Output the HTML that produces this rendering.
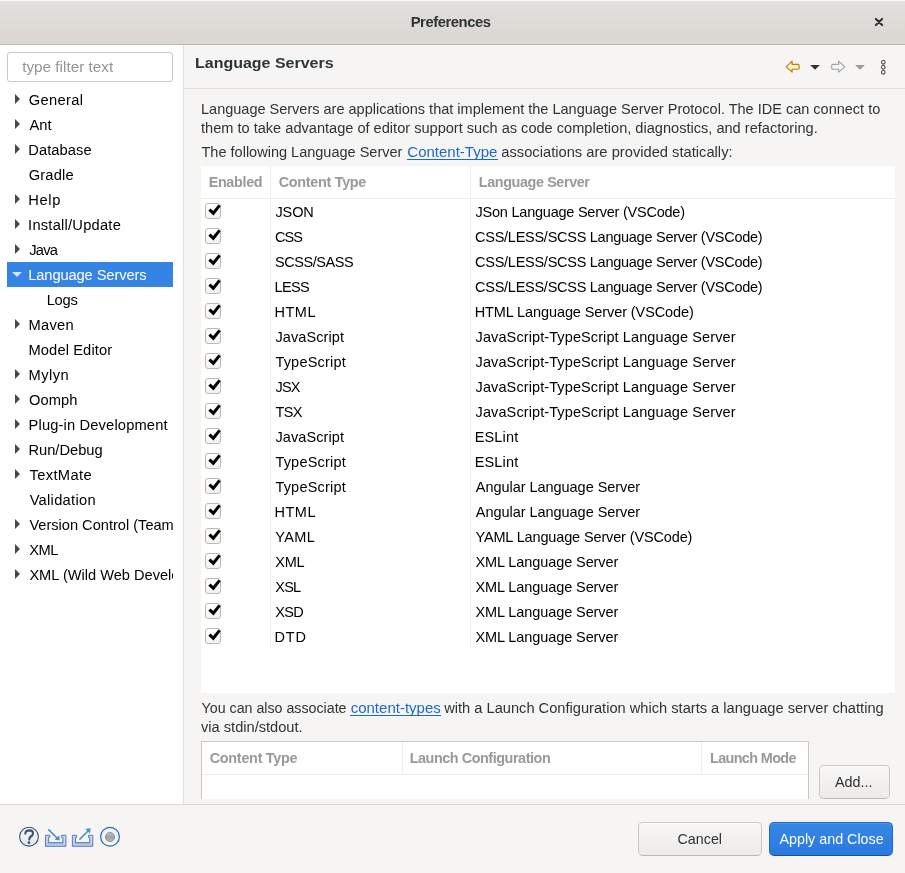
<!DOCTYPE html>
<html><head><meta charset="utf-8"><title>Preferences</title>
<style>
html,body{margin:0;padding:0}
body{width:905px;height:873px;position:relative;overflow:hidden;background:#f6f5f4;font-family:"Liberation Sans", sans-serif}
.t{position:absolute;line-height:20px;white-space:nowrap}
.lk{color:#1b6acb;text-decoration:underline}
.cb{position:absolute;width:14px;height:14px;border:1px solid #bfb8b1;border-radius:3px;background:linear-gradient(#ffffff,#f3f2f1)}
.btn{position:absolute;border:1px solid #cdc7c2;border-bottom-color:#bfb8b1;border-radius:5px;background:linear-gradient(#f8f7f6,#edebe9);box-shadow:inset 0 1px #fff}
</style></head><body><div id="root" style="position:absolute;left:0;top:0;width:905px;height:873px;will-change:transform">
<div style="position:absolute;left:0;top:0;width:905px;height:44px;background:linear-gradient(#e3e0dd,#dad6d2);border-bottom:1px solid #bfb8b1;box-shadow:inset 0 1px #faf9f8"></div>
<div class="t" style="left:410.64px;top:11.87px;font-size:14.8px;color:#2e3436;font-weight:bold;letter-spacing:-0.438px;">Preferences</div>
<svg style="position:absolute;left:872px;top:15px" width="14" height="14"><path d="M3.9 3.9 L10.1 10.1 M10.1 3.9 L3.9 10.1" stroke="#2e3436" stroke-width="2.1" stroke-linecap="round"/></svg>
<div style="position:absolute;left:0;top:45px;width:183px;height:759px;background:#fff;border-right:1px solid #e2e0de"></div>
<div style="position:absolute;left:7px;top:52px;width:164px;height:28px;border:1px solid #cdc7c2;border-radius:3px;background:#fff"></div>
<div class="t" style="left:22.20px;top:56.70px;font-size:15.3px;color:#929595;font-weight:normal;letter-spacing:0px;">type filter text</div>
<div style="position:absolute;left:7px;top:87px;width:166px;height:510px;overflow:hidden">
<svg style="position:absolute;left:8px;top:7px" width="6" height="10"><path d="M0 0 L5 5 L0 10Z" fill="#45494b"/></svg>
<div class="t" style="left:21.66px;top:2.71px;font-size:14.7px;color:#000;font-weight:normal;letter-spacing:0.339px;">General</div>
<svg style="position:absolute;left:8px;top:32px" width="6" height="10"><path d="M0 0 L5 5 L0 10Z" fill="#45494b"/></svg>
<div class="t" style="left:22.40px;top:27.71px;font-size:14.7px;color:#000;font-weight:normal;letter-spacing:0.112px;">Ant</div>
<svg style="position:absolute;left:8px;top:57px" width="6" height="10"><path d="M0 0 L5 5 L0 10Z" fill="#45494b"/></svg>
<div class="t" style="left:21.22px;top:52.71px;font-size:14.7px;color:#000;font-weight:normal;letter-spacing:0.078px;">Database</div>
<div class="t" style="left:21.66px;top:77.71px;font-size:14.7px;color:#000;font-weight:normal;letter-spacing:0.165px;">Gradle</div>
<svg style="position:absolute;left:8px;top:107px" width="6" height="10"><path d="M0 0 L5 5 L0 10Z" fill="#45494b"/></svg>
<div class="t" style="left:21.22px;top:102.71px;font-size:14.7px;color:#000;font-weight:normal;letter-spacing:0.685px;">Help</div>
<svg style="position:absolute;left:8px;top:132px" width="6" height="10"><path d="M0 0 L5 5 L0 10Z" fill="#45494b"/></svg>
<div class="t" style="left:21.08px;top:127.71px;font-size:14.7px;color:#000;font-weight:normal;letter-spacing:0.225px;">Install/Update</div>
<svg style="position:absolute;left:8px;top:157px" width="6" height="10"><path d="M0 0 L5 5 L0 10Z" fill="#45494b"/></svg>
<div class="t" style="left:22.18px;top:152.71px;font-size:14.7px;color:#000;font-weight:normal;letter-spacing:-0.732px;">Java</div>
<div style="position:absolute;left:0;top:175px;width:166px;height:25px;background:#3584e4"></div>
<svg style="position:absolute;left:5px;top:185px" width="10" height="6"><path d="M0 0 L10 0 L5 5Z" fill="#d0e1f8"/></svg>
<div class="t" style="left:21.22px;top:177.71px;font-size:14.7px;color:#fff;font-weight:normal;letter-spacing:-0.112px;">Language Servers</div>
<div class="t" style="left:39.72px;top:202.71px;font-size:14.7px;color:#000;font-weight:normal;letter-spacing:-0.269px;">Logs</div>
<svg style="position:absolute;left:8px;top:232px" width="6" height="10"><path d="M0 0 L5 5 L0 10Z" fill="#45494b"/></svg>
<div class="t" style="left:21.52px;top:227.71px;font-size:14.7px;color:#000;font-weight:normal;letter-spacing:0.258px;">Maven</div>
<div class="t" style="left:21.52px;top:252.71px;font-size:14.7px;color:#000;font-weight:normal;letter-spacing:0.103px;">Model Editor</div>
<svg style="position:absolute;left:8px;top:282px" width="6" height="10"><path d="M0 0 L5 5 L0 10Z" fill="#45494b"/></svg>
<div class="t" style="left:21.52px;top:277.71px;font-size:14.7px;color:#000;font-weight:normal;letter-spacing:0.441px;">Mylyn</div>
<svg style="position:absolute;left:8px;top:307px" width="6" height="10"><path d="M0 0 L5 5 L0 10Z" fill="#45494b"/></svg>
<div class="t" style="left:22.04px;top:302.71px;font-size:14.7px;color:#000;font-weight:normal;letter-spacing:0.075px;">Oomph</div>
<svg style="position:absolute;left:8px;top:332px" width="6" height="10"><path d="M0 0 L5 5 L0 10Z" fill="#45494b"/></svg>
<div class="t" style="left:21.52px;top:327.71px;font-size:14.7px;color:#000;font-weight:normal;letter-spacing:0.152px;">Plug-in Development</div>
<svg style="position:absolute;left:8px;top:357px" width="6" height="10"><path d="M0 0 L5 5 L0 10Z" fill="#45494b"/></svg>
<div class="t" style="left:21.52px;top:352.71px;font-size:14.7px;color:#000;font-weight:normal;letter-spacing:-0.031px;">Run/Debug</div>
<svg style="position:absolute;left:8px;top:382px" width="6" height="10"><path d="M0 0 L5 5 L0 10Z" fill="#45494b"/></svg>
<div class="t" style="left:22.41px;top:377.71px;font-size:14.7px;color:#000;font-weight:normal;letter-spacing:0.382px;">TextMate</div>
<div class="t" style="left:22.63px;top:402.71px;font-size:14.7px;color:#000;font-weight:normal;letter-spacing:0.278px;">Validation</div>
<svg style="position:absolute;left:8px;top:432px" width="6" height="10"><path d="M0 0 L5 5 L0 10Z" fill="#45494b"/></svg>
<div class="t" style="left:22.40px;top:427.74px;font-size:14.6px;color:#000;font-weight:normal;letter-spacing:0px;">Version Control (Team)</div>
<svg style="position:absolute;left:8px;top:457px" width="6" height="10"><path d="M0 0 L5 5 L0 10Z" fill="#45494b"/></svg>
<div class="t" style="left:22.33px;top:452.71px;font-size:14.7px;color:#000;font-weight:normal;letter-spacing:-0.55px;">XML</div>
<svg style="position:absolute;left:8px;top:482px" width="6" height="10"><path d="M0 0 L5 5 L0 10Z" fill="#45494b"/></svg>
<div class="t" style="left:22.40px;top:477.74px;font-size:14.6px;color:#000;font-weight:normal;letter-spacing:0px;">XML (Wild Web Developer)</div>
</div>
<div style="position:absolute;left:184px;top:88px;width:721px;height:1px;background:#dfdcd9"></div>
<div class="t" style="left:195.46px;top:53.18px;font-size:13.9px;color:#2e3436;font-weight:bold;letter-spacing:0px;transform:scaleX(1.1507);transform-origin:0 0">Language Servers</div>
<svg style="position:absolute;left:780px;top:55px" width="110" height="24" viewBox="0 0 110 24">
<defs><linearGradient id="ag" x1="0" y1="0" x2="0" y2="1"><stop offset="0" stop-color="#fffbe6"/><stop offset="1" stop-color="#fbe9a6"/></linearGradient></defs><path d="M6.2 11.8 L12.1 6.2 L12.1 9.3 L18.1 9.3 Q19.1 9.3 19.1 10.3 L19.1 13.2 Q19.1 14.2 18.1 14.2 L12.1 14.2 L12.1 17.2 Z" fill="url(#ag)" stroke="#b77f10" stroke-width="1.15" stroke-linejoin="round"/>
<path d="M30.2 9.9 L39.8 9.9 L35 14.8 Z" fill="#2e3436"/>
<path d="M64.8 11.8 L58.6 6.2 L58.6 9.4 L52.7 9.4 Q51.7 9.4 51.7 10.4 L51.7 13.2 Q51.7 14.2 52.7 14.2 L58.6 14.2 L58.6 17.2 Z" fill="#f7f7f7" stroke="#a3a3a3" stroke-width="1.1" stroke-linejoin="round"/>
<path d="M75.2 9.9 L84.8 9.9 L80 14.8 Z" fill="#9a9a9a"/>
<circle cx="103.3" cy="7.3" r="1.8" fill="#fff" stroke="#444" stroke-width="1.05"/>
<circle cx="103.3" cy="12.3" r="1.8" fill="#fff" stroke="#444" stroke-width="1.05"/>
<circle cx="103.3" cy="17.3" r="1.8" fill="#fff" stroke="#444" stroke-width="1.05"/>
</svg>
<div class="t" style="left:201.00px;top:98.98px;font-size:14.5px;color:#2e3436;font-weight:normal;letter-spacing:0px;white-space:nowrap">Language Servers are applications that implement the Language Server Protocol. The IDE can connect to</div>
<div class="t" style="left:201.00px;top:117.95px;font-size:14.58px;color:#2e3436;font-weight:normal;letter-spacing:0px;white-space:nowrap">them to take advantage of editor support such as code completion, diagnostics, and refactoring.</div>
<div class="t" style="left:201.50px;top:141.97px;font-size:14.52px;color:#2e3436;font-weight:normal;letter-spacing:0px;">The following Language Server</div>
<div class="t" style="left:407.30px;top:141.80px;font-size:15.0px;color:#1b6acb;font-weight:normal;letter-spacing:0px;">Content-Type</div>
<div style="position:absolute;left:407px;top:159px;width:91px;height:1px;background:#1b6acb"></div>
<div class="t" style="left:501.30px;top:141.90px;font-size:14.71px;color:#2e3436;font-weight:normal;letter-spacing:0px;">associations are provided statically:</div>
<div style="position:absolute;left:201px;top:166px;width:694px;height:527px;background:#fff"></div>
<div style="position:absolute;left:201px;top:198px;width:694px;height:1px;background:#efedeb"></div>
<div style="position:absolute;left:270px;top:166px;width:1px;height:483px;background:#efedeb"></div>
<div style="position:absolute;left:470px;top:166px;width:1px;height:483px;background:#efedeb"></div>
<div class="t" style="left:208.66px;top:172.01px;font-size:14.4px;color:#979a9a;font-weight:bold;letter-spacing:-0.341px;">Enabled</div>
<div class="t" style="left:278.72px;top:172.01px;font-size:14.4px;color:#979a9a;font-weight:bold;letter-spacing:-0.293px;">Content Type</div>
<div class="t" style="left:478.86px;top:172.01px;font-size:14.4px;color:#979a9a;font-weight:bold;letter-spacing:-0.407px;">Language Server</div>
<div class="cb" style="left:205px;top:203px"><svg width="16" height="16" style="position:absolute;left:-1px;top:-1px"><path d="M4.4 6.6 L8.3 10.2 L14.6 2.4" stroke="#000" stroke-width="3" fill="none"/></svg></div>
<div class="t" style="left:275.48px;top:201.98px;font-size:14.5px;color:#000;font-weight:normal;letter-spacing:-0.122px;">JSON</div>
<div class="t" style="left:475.58px;top:201.98px;font-size:14.5px;color:#000;font-weight:normal;letter-spacing:-0.235px;">JSon Language Server (VSCode)</div>
<div class="cb" style="left:205px;top:228px"><svg width="16" height="16" style="position:absolute;left:-1px;top:-1px"><path d="M4.4 6.6 L8.3 10.2 L14.6 2.4" stroke="#000" stroke-width="3" fill="none"/></svg></div>
<div class="t" style="left:274.97px;top:226.98px;font-size:14.5px;color:#000;font-weight:normal;letter-spacing:-0.91px;">CSS</div>
<div class="t" style="left:475.07px;top:226.98px;font-size:14.5px;color:#000;font-weight:normal;letter-spacing:-0.265px;">CSS/LESS/SCSS Language Server (VSCode)</div>
<div class="cb" style="left:205px;top:253px"><svg width="16" height="16" style="position:absolute;left:-1px;top:-1px"><path d="M4.4 6.6 L8.3 10.2 L14.6 2.4" stroke="#000" stroke-width="3" fill="none"/></svg></div>
<div class="t" style="left:275.05px;top:251.98px;font-size:14.5px;color:#000;font-weight:normal;letter-spacing:-0.442px;">SCSS/SASS</div>
<div class="t" style="left:475.07px;top:251.98px;font-size:14.5px;color:#000;font-weight:normal;letter-spacing:-0.265px;">CSS/LESS/SCSS Language Server (VSCode)</div>
<div class="cb" style="left:205px;top:278px"><svg width="16" height="16" style="position:absolute;left:-1px;top:-1px"><path d="M4.4 6.6 L8.3 10.2 L14.6 2.4" stroke="#000" stroke-width="3" fill="none"/></svg></div>
<div class="t" style="left:274.54px;top:276.98px;font-size:14.5px;color:#000;font-weight:normal;letter-spacing:-0.645px;">LESS</div>
<div class="t" style="left:475.07px;top:276.98px;font-size:14.5px;color:#000;font-weight:normal;letter-spacing:-0.265px;">CSS/LESS/SCSS Language Server (VSCode)</div>
<div class="cb" style="left:205px;top:303px"><svg width="16" height="16" style="position:absolute;left:-1px;top:-1px"><path d="M4.4 6.6 L8.3 10.2 L14.6 2.4" stroke="#000" stroke-width="3" fill="none"/></svg></div>
<div class="t" style="left:274.54px;top:301.98px;font-size:14.5px;color:#000;font-weight:normal;letter-spacing:0.485px;">HTML</div>
<div class="t" style="left:474.64px;top:301.98px;font-size:14.5px;color:#000;font-weight:normal;letter-spacing:-0.097px;">HTML Language Server (VSCode)</div>
<div class="cb" style="left:205px;top:328px"><svg width="16" height="16" style="position:absolute;left:-1px;top:-1px"><path d="M4.4 6.6 L8.3 10.2 L14.6 2.4" stroke="#000" stroke-width="3" fill="none"/></svg></div>
<div class="t" style="left:275.48px;top:326.98px;font-size:14.5px;color:#000;font-weight:normal;letter-spacing:0.094px;">JavaScript</div>
<div class="t" style="left:475.58px;top:326.98px;font-size:14.5px;color:#000;font-weight:normal;letter-spacing:0.101px;">JavaScript-TypeScript Language Server</div>
<div class="cb" style="left:205px;top:353px"><svg width="16" height="16" style="position:absolute;left:-1px;top:-1px"><path d="M4.4 6.6 L8.3 10.2 L14.6 2.4" stroke="#000" stroke-width="3" fill="none"/></svg></div>
<div class="t" style="left:275.41px;top:351.98px;font-size:14.5px;color:#000;font-weight:normal;letter-spacing:0.203px;">TypeScript</div>
<div class="t" style="left:475.58px;top:351.98px;font-size:14.5px;color:#000;font-weight:normal;letter-spacing:0.101px;">JavaScript-TypeScript Language Server</div>
<div class="cb" style="left:205px;top:378px"><svg width="16" height="16" style="position:absolute;left:-1px;top:-1px"><path d="M4.4 6.6 L8.3 10.2 L14.6 2.4" stroke="#000" stroke-width="3" fill="none"/></svg></div>
<div class="t" style="left:275.48px;top:376.98px;font-size:14.5px;color:#000;font-weight:normal;letter-spacing:-0.814px;">JSX</div>
<div class="t" style="left:475.58px;top:376.98px;font-size:14.5px;color:#000;font-weight:normal;letter-spacing:0.101px;">JavaScript-TypeScript Language Server</div>
<div class="cb" style="left:205px;top:403px"><svg width="16" height="16" style="position:absolute;left:-1px;top:-1px"><path d="M4.4 6.6 L8.3 10.2 L14.6 2.4" stroke="#000" stroke-width="3" fill="none"/></svg></div>
<div class="t" style="left:275.41px;top:401.98px;font-size:14.5px;color:#000;font-weight:normal;letter-spacing:-0.611px;">TSX</div>
<div class="t" style="left:475.58px;top:401.98px;font-size:14.5px;color:#000;font-weight:normal;letter-spacing:0.101px;">JavaScript-TypeScript Language Server</div>
<div class="cb" style="left:205px;top:428px"><svg width="16" height="16" style="position:absolute;left:-1px;top:-1px"><path d="M4.4 6.6 L8.3 10.2 L14.6 2.4" stroke="#000" stroke-width="3" fill="none"/></svg></div>
<div class="t" style="left:275.48px;top:426.98px;font-size:14.5px;color:#000;font-weight:normal;letter-spacing:0.094px;">JavaScript</div>
<div class="t" style="left:474.64px;top:426.98px;font-size:14.5px;color:#000;font-weight:normal;letter-spacing:0.166px;">ESLint</div>
<div class="cb" style="left:205px;top:453px"><svg width="16" height="16" style="position:absolute;left:-1px;top:-1px"><path d="M4.4 6.6 L8.3 10.2 L14.6 2.4" stroke="#000" stroke-width="3" fill="none"/></svg></div>
<div class="t" style="left:275.41px;top:451.98px;font-size:14.5px;color:#000;font-weight:normal;letter-spacing:0.203px;">TypeScript</div>
<div class="t" style="left:474.64px;top:451.98px;font-size:14.5px;color:#000;font-weight:normal;letter-spacing:0.166px;">ESLint</div>
<div class="cb" style="left:205px;top:478px"><svg width="16" height="16" style="position:absolute;left:-1px;top:-1px"><path d="M4.4 6.6 L8.3 10.2 L14.6 2.4" stroke="#000" stroke-width="3" fill="none"/></svg></div>
<div class="t" style="left:275.41px;top:476.98px;font-size:14.5px;color:#000;font-weight:normal;letter-spacing:0.203px;">TypeScript</div>
<div class="t" style="left:475.80px;top:476.98px;font-size:14.5px;color:#000;font-weight:normal;letter-spacing:-0.041px;">Angular Language Server</div>
<div class="cb" style="left:205px;top:503px"><svg width="16" height="16" style="position:absolute;left:-1px;top:-1px"><path d="M4.4 6.6 L8.3 10.2 L14.6 2.4" stroke="#000" stroke-width="3" fill="none"/></svg></div>
<div class="t" style="left:274.54px;top:501.98px;font-size:14.5px;color:#000;font-weight:normal;letter-spacing:0.485px;">HTML</div>
<div class="t" style="left:475.80px;top:501.98px;font-size:14.5px;color:#000;font-weight:normal;letter-spacing:-0.041px;">Angular Language Server</div>
<div class="cb" style="left:205px;top:528px"><svg width="16" height="16" style="position:absolute;left:-1px;top:-1px"><path d="M4.4 6.6 L8.3 10.2 L14.6 2.4" stroke="#000" stroke-width="3" fill="none"/></svg></div>
<div class="t" style="left:275.34px;top:526.98px;font-size:14.5px;color:#000;font-weight:normal;letter-spacing:0.324px;">YAML</div>
<div class="t" style="left:475.44px;top:526.98px;font-size:14.5px;color:#000;font-weight:normal;letter-spacing:-0.139px;">YAML Language Server (VSCode)</div>
<div class="cb" style="left:205px;top:553px"><svg width="16" height="16" style="position:absolute;left:-1px;top:-1px"><path d="M4.4 6.6 L8.3 10.2 L14.6 2.4" stroke="#000" stroke-width="3" fill="none"/></svg></div>
<div class="t" style="left:275.34px;top:551.98px;font-size:14.5px;color:#000;font-weight:normal;letter-spacing:-0.35px;">XML</div>
<div class="t" style="left:475.44px;top:551.98px;font-size:14.5px;color:#000;font-weight:normal;letter-spacing:-0.095px;">XML Language Server</div>
<div class="cb" style="left:205px;top:578px"><svg width="16" height="16" style="position:absolute;left:-1px;top:-1px"><path d="M4.4 6.6 L8.3 10.2 L14.6 2.4" stroke="#000" stroke-width="3" fill="none"/></svg></div>
<div class="t" style="left:275.34px;top:576.98px;font-size:14.5px;color:#000;font-weight:normal;letter-spacing:-0.854px;">XSL</div>
<div class="t" style="left:475.44px;top:576.98px;font-size:14.5px;color:#000;font-weight:normal;letter-spacing:-0.095px;">XML Language Server</div>
<div class="cb" style="left:205px;top:603px"><svg width="16" height="16" style="position:absolute;left:-1px;top:-1px"><path d="M4.4 6.6 L8.3 10.2 L14.6 2.4" stroke="#000" stroke-width="3" fill="none"/></svg></div>
<div class="t" style="left:275.34px;top:601.98px;font-size:14.5px;color:#000;font-weight:normal;letter-spacing:-0.741px;">XSD</div>
<div class="t" style="left:475.44px;top:601.98px;font-size:14.5px;color:#000;font-weight:normal;letter-spacing:-0.095px;">XML Language Server</div>
<div class="cb" style="left:205px;top:628px"><svg width="16" height="16" style="position:absolute;left:-1px;top:-1px"><path d="M4.4 6.6 L8.3 10.2 L14.6 2.4" stroke="#000" stroke-width="3" fill="none"/></svg></div>
<div class="t" style="left:274.54px;top:626.98px;font-size:14.5px;color:#000;font-weight:normal;letter-spacing:0.758px;">DTD</div>
<div class="t" style="left:475.44px;top:626.98px;font-size:14.5px;color:#000;font-weight:normal;letter-spacing:-0.095px;">XML Language Server</div>
<div class="t" style="left:201.60px;top:698.37px;font-size:14.22px;color:#2e3436;font-weight:normal;letter-spacing:0px;">You can also associate</div>
<div class="t" style="left:350.70px;top:698.10px;font-size:15.0px;color:#1b6acb;font-weight:normal;letter-spacing:0px;">content-types</div>
<div style="position:absolute;left:350px;top:715px;width:91px;height:1px;background:#1b6acb"></div>
<div class="t" style="left:444.20px;top:698.22px;font-size:14.65px;color:#2e3436;font-weight:normal;letter-spacing:0px;">with a Launch Configuration which starts a language server chatting</div>
<div class="t" style="left:201.00px;top:717.23px;font-size:14.64px;color:#2e3436;font-weight:normal;letter-spacing:0px;white-space:nowrap">via stdin/stdout.</div>
<div style="position:absolute;left:201px;top:741px;width:606px;height:57px;background:#fff;border:1px solid #cdc7c2;border-bottom:none;overflow:hidden">
<div style="position:absolute;left:0;top:32px;width:606px;height:1px;background:#efedeb"></div>
<div style="position:absolute;left:200px;top:0;width:1px;height:33px;background:#efedeb"></div>
<div style="position:absolute;left:499px;top:0;width:1px;height:33px;background:#efedeb"></div>
</div>
<div class="t" style="left:209.72px;top:748.01px;font-size:14.4px;color:#979a9a;font-weight:bold;letter-spacing:-0.275px;">Content Type</div>
<div class="t" style="left:409.66px;top:748.01px;font-size:14.4px;color:#979a9a;font-weight:bold;letter-spacing:-0.444px;">Launch Configuration</div>
<div class="t" style="left:709.96px;top:748.01px;font-size:14.4px;color:#979a9a;font-weight:bold;letter-spacing:-0.614px;">Launch Mode</div>
<div class="btn" style="left:819px;top:765px;width:69px;height:32px"></div>
<div class="t" style="left:835.00px;top:772.01px;font-size:14.4px;color:#2e3436;font-weight:normal;letter-spacing:0px;">Add...</div>
<div style="position:absolute;left:0;top:804px;width:905px;height:69px;background:#f6f5f4;border-top:1px solid #dcd8d4"></div>
<div class="btn" style="left:638px;top:822px;width:122px;height:32px"></div>
<div class="t" style="left:677.50px;top:829.05px;font-size:14.3px;color:#2e3436;font-weight:normal;letter-spacing:0px;">Cancel</div>
<div style="position:absolute;left:769px;top:822px;width:122px;height:32px;border:1px solid #1b6acb;border-bottom-color:#15539e;border-radius:5px;background:linear-gradient(#3787e6,#2a79e0);box-shadow:inset 0 1px rgba(255,255,255,0.12)"></div>
<div class="t" style="left:779.50px;top:829.05px;font-size:14.3px;color:#fff;font-weight:normal;letter-spacing:0px;white-space:nowrap">Apply and Close</div>
<svg style="position:absolute;left:15px;top:822px" width="110" height="30" viewBox="15 822 110 30">
<defs>
<linearGradient id="hg" x1="0" y1="0" x2="0" y2="1"><stop offset="0" stop-color="#fbfbfb"/><stop offset="1" stop-color="#e3e5e9"/></linearGradient>
<linearGradient id="tg" x1="0" y1="0" x2="0" y2="1"><stop offset="0" stop-color="#c9d6ef"/><stop offset="1" stop-color="#9bb1dc"/></linearGradient>
<linearGradient id="dg" x1="0" y1="0" x2="0" y2="1"><stop offset="0" stop-color="#c4c4c4"/><stop offset="0.5" stop-color="#a2a2a2"/><stop offset="1" stop-color="#b5b5b5"/></linearGradient>
</defs>
<circle cx="29" cy="836.7" r="9.4" fill="url(#hg)" stroke="#3b5078" stroke-width="1.1"/>
<path d="M25.3 833.6 Q25.6 830.4 29.4 830.4 Q33 830.6 33 833.3 Q33 835.3 30.9 836.5 Q29.3 837.4 29.3 839.6" fill="none" stroke="#3b5078" stroke-width="2.1" stroke-linecap="round"/>
<circle cx="28.9" cy="842.7" r="1.35" fill="#3b5078"/>
<path d="M45.5 835.3 L49.8 835.3 L49.8 837.4 L48.6 837.4 L48.6 842.6 L62.8 842.6 L62.8 837.4 L61.6 837.4 L61.6 835.3 L65.9 835.3 L65.9 846.3 L45.5 846.3 Z" fill="url(#tg)" stroke="#5f7dba" stroke-width="1"/>
<path d="M47 836.6 L47 845 L64.4 845 L64.4 836.6" fill="none" stroke="#e3eaf7" stroke-width="0.8" opacity="0.8"/>
<path d="M48.3 829.4 L57.2 838.2" fill="none" stroke="#4a90bf" stroke-width="1.6"/>
<path d="M59.8 840.4 L54.6 839.8 L59.2 835.2 Z" fill="#4a90bf"/>
<path d="M72.4 835.3 L76.7 835.3 L76.7 837.4 L75.5 837.4 L75.5 842.6 L89.7 842.6 L89.7 837.4 L88.5 837.4 L88.5 835.3 L92.8 835.3 L92.8 846.3 L72.4 846.3 Z" fill="url(#tg)" stroke="#5f7dba" stroke-width="1"/>
<path d="M73.9 836.6 L73.9 845 L91.3 845 L91.3 836.6" fill="none" stroke="#e3eaf7" stroke-width="0.8" opacity="0.8"/>
<path d="M79.4 839.6 L88 831" fill="none" stroke="#4a90bf" stroke-width="1.6"/>
<path d="M90.7 828.3 L89.9 833.6 L85.4 829.1 Z" fill="#4a90bf"/>
<circle cx="110" cy="836.7" r="9.4" fill="#eef4fa" stroke="#2f6aab" stroke-width="1.2"/>
<circle cx="110" cy="837" r="4.6" fill="url(#dg)" stroke="#8c8c8c" stroke-width="0.9"/>
</svg>
</div></body></html>
